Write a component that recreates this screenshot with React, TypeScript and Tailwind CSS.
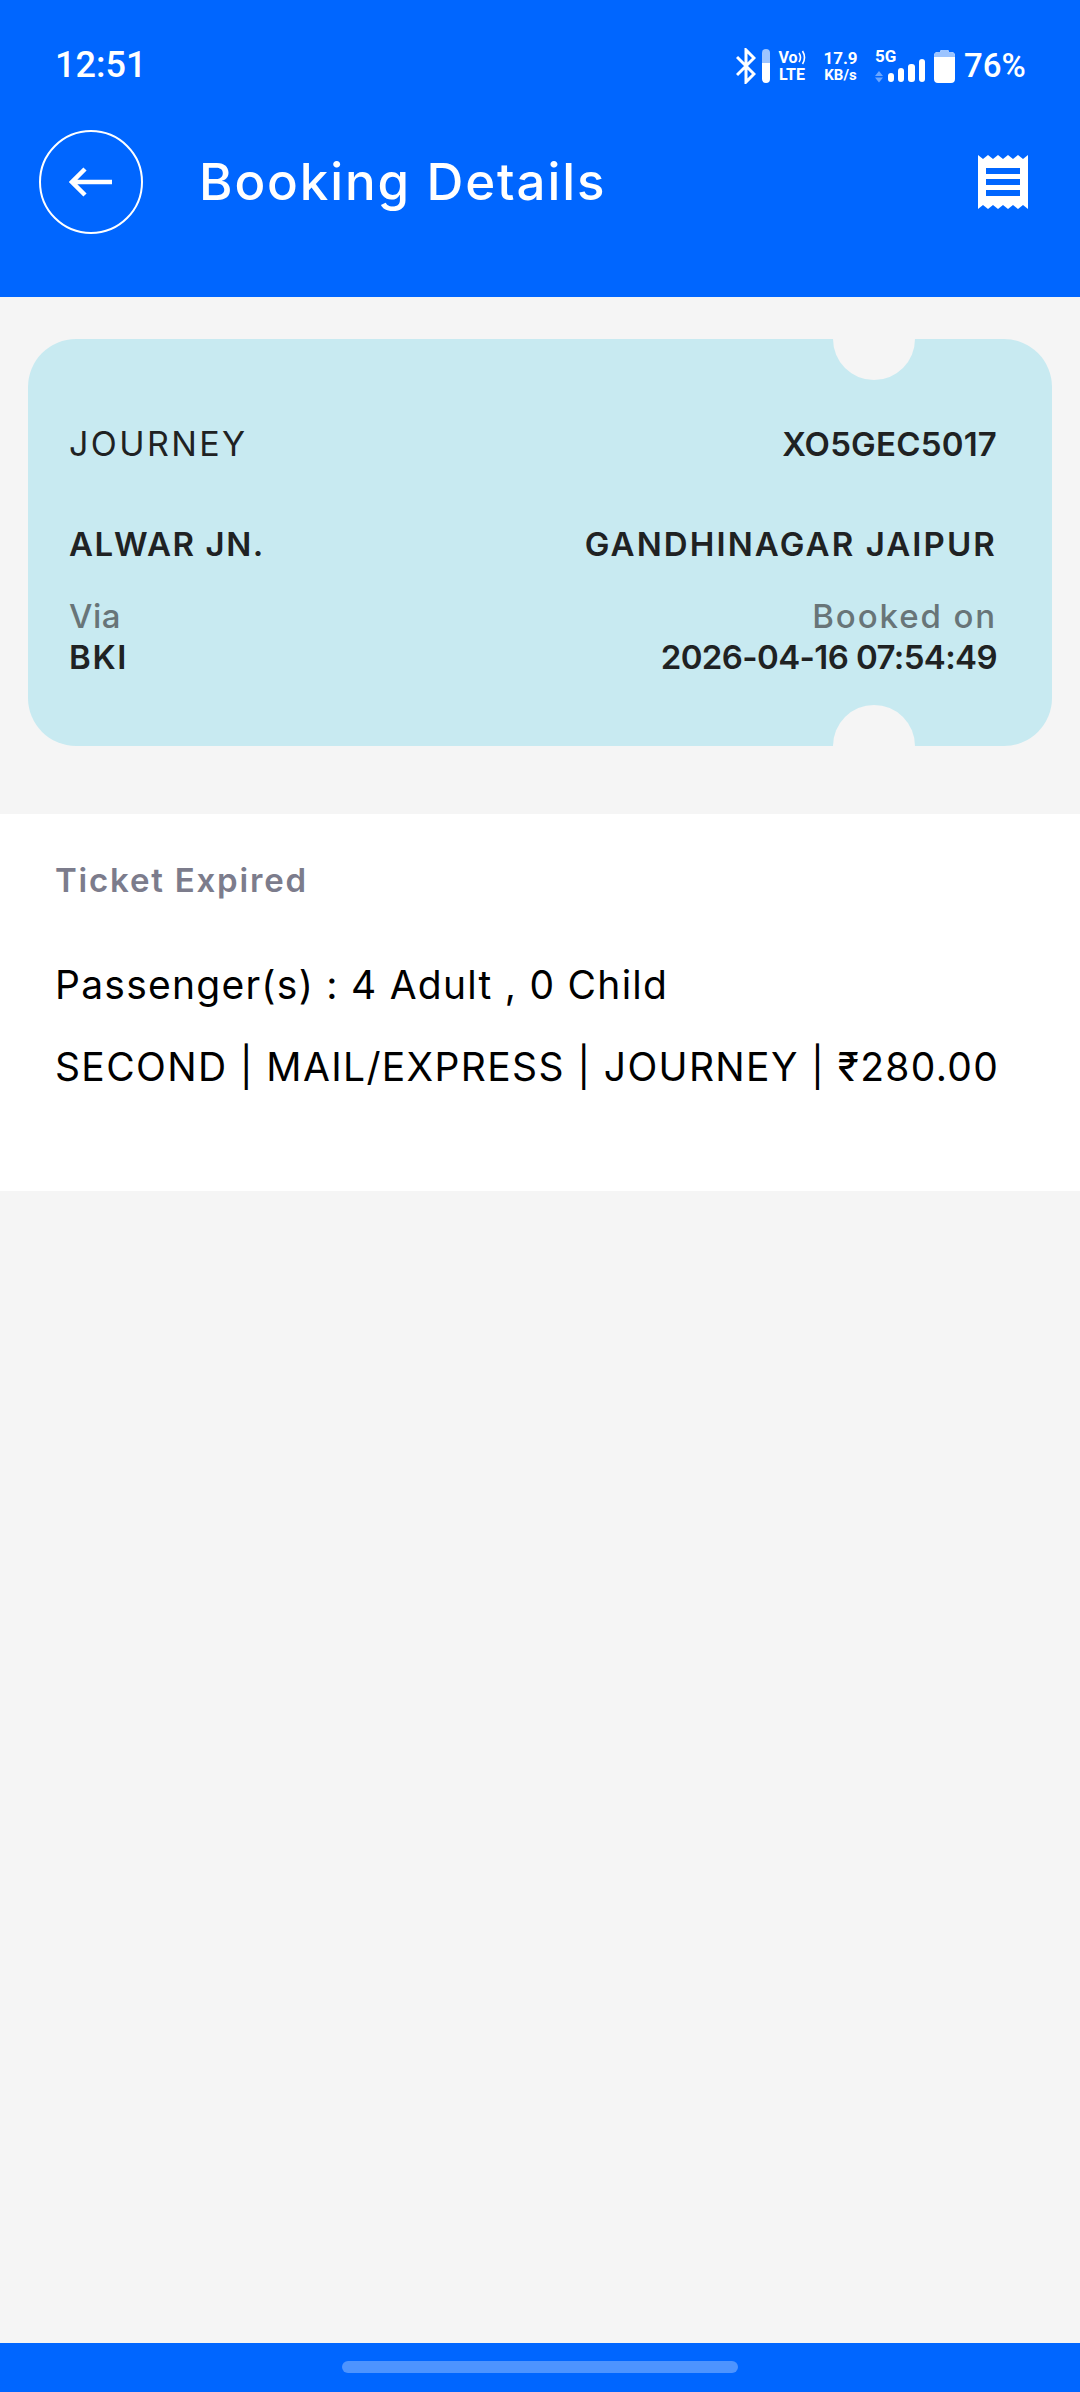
const sans = "font-['Inter','Noto_Sans',sans-serif]";

function BluetoothIcon() {
  return (
    <svg width="20" height="36" viewBox="0 0 20 36" fill="none" stroke="white" strokeWidth="3">
      <path d="M1 9l17 17-8 8V2l8 8L1 27" />
    </svg>
  );
}

function VolteWaves() {
  return (
    <svg width="8" height="15" viewBox="0 0 8 15" fill="none" stroke="white" strokeWidth="1.6">
      <path d="M1 3q3 4.500 0 9M4.500 1q4 6.500 0 13" />
    </svg>
  );
}

function SignalIcon() {
  return (
    <svg width="50" height="34" viewBox="0 0 50 34">
      <path d="M0 27l4-5 4 5zM0 28.500l4 5 4-5z" fill="#6ba6ff" />
      <rect x="13" y="24" width="6" height="9" rx="3" fill="white" />
      <rect x="23" y="19" width="6" height="14" rx="3" fill="white" />
      <rect x="33" y="15" width="7" height="18" rx="3" fill="white" />
      <rect x="44" y="10" width="6" height="23" rx="3" fill="white" />
    </svg>
  );
}

function BatteryIcon() {
  return (
    <svg width="21" height="34" viewBox="0 0 21 34">
      <path d="M6 3q0-2 2-2h5q2 0 2 2h2q4 0 4 4v23q0 4-4 4H4q-4 0-4-4V7q0-4 4-4z" fill="white" />
      <path d="M6 3q0-2 2-2h5q2 0 2 2h2q4 0 4 4v1H0V7q0-4 4-4z" fill="#9cc4ff" />
    </svg>
  );
}

function ReceiptIcon() {
  return (
    <svg width="50" height="54" viewBox="0 0 50 54">
      <path
        d="M0 0l5 4 5-4 5 4 5-4 5 4 5-4 5 4 5-4 5 4 5-4v54l-5-4-5 4-5-4-5 4-5-4-5 4-5-4-5 4-5-4-5 4z"
        fill="white"
      />
      <path d="M8 13h34v6H8zM8 24h34v6H8zM8 35h34v6H8z" fill="#0066ff" />
    </svg>
  );
}

export default function App() {
  return (
    <div className={`${sans} flex h-[2392px] w-[1080px] flex-col bg-[#f5f5f5]`}>
      {/* Header */}
      <header className="h-[297px] shrink-0 bg-[#0066ff] text-white">
        <div className="flex h-[130px] items-center justify-between pr-[56px] pl-[55px]">
          <span className="font-['Roboto',sans-serif] text-[36px] font-medium">12:51</span>
          <div className="flex items-center pt-[1px] font-['Roboto',sans-serif] font-bold text-white">
            <BluetoothIcon />
            <div className="ml-[6px] h-[34px] w-[8px] rounded-full bg-[linear-gradient(#9cc4ff_40%,#ffffff_40%)]" />
            <div className="ml-[8px] flex w-[28px] flex-col items-center text-[16px] leading-[17px]">
              <span className="flex items-center">
                Vo
                <VolteWaves />
              </span>
              <span>LTE</span>
            </div>
            <div className="ml-[16px] flex w-[37px] flex-col items-center text-[17px] leading-[18px]">
              <span>17.9</span>
              <span className="text-[15px] leading-[16px]">KB/s</span>
            </div>
            <div className="ml-[16px] flex flex-col">
              <span className="h-0 text-[17px] leading-[15px]">5G</span>
              <SignalIcon />
            </div>
            <div className="ml-[9px]">
              <BatteryIcon />
            </div>
            <span className="ml-[9px] w-[60px] text-[33px] font-medium whitespace-nowrap">76%</span>
          </div>
        </div>
        <div className="flex h-[104px] items-center justify-between pr-[52px] pl-[39px]">
          <div className="flex items-center">
            <div className="flex h-[104px] w-[104px] items-center justify-center rounded-full border-[2.5px] border-white">
              <svg width="44" height="30" viewBox="0 0 44 30" fill="none" stroke="white" strokeWidth="4.5">
                <path d="M43 15H3M16 2L3 15l13 13" />
              </svg>
            </div>
            <h1 className="ml-[56px] text-[51px] font-medium tracking-[1.9px]">Booking Details</h1>
          </div>
          <ReceiptIcon />
        </div>
      </header>

      {/* Ticket card */}
      <section className="relative mx-[28px] mt-[42px] h-[407px] shrink-0 overflow-hidden rounded-[48px] bg-[#c8eaf1] pt-[85px] pr-[55px] pl-[41px] text-[#1f2223]">
        <div className="absolute top-[-41px] left-[805px] h-[82px] w-[82px] rounded-full bg-[#f5f5f5]" />
        <div className="absolute bottom-[-41px] left-[805px] h-[82px] w-[82px] rounded-full bg-[#f5f5f5]" />
        <div className="flex justify-between text-[33px] leading-[40px]">
          <span className="text-[34px] tracking-[2.4px]">JOURNEY</span>
          <span className="font-semibold tracking-[0.2px]">XO5GEC5017</span>
        </div>
        <div className="mt-[60px] flex justify-between text-[33px] leading-[40px] font-semibold">
          <span className="tracking-[1.55px]">ALWAR JN.</span>
          <span className="tracking-[2.1px]">GANDHINAGAR JAIPUR</span>
        </div>
        <div className="mt-[32px] flex justify-between text-[33px] leading-[40px] font-medium text-[#687578]">
          <span className="tracking-[0.5px]">Via</span>
          <span className="tracking-[1.9px]">Booked on</span>
        </div>
        <div className="mt-[1px] flex justify-between text-[33px] leading-[40px] font-semibold">
          <span className="tracking-[1.7px]">BKI</span>
          <span className="tracking-[-0.6px]">2026-04-16 07:54:49</span>
        </div>
      </section>

      {/* Ticket info */}
      <section className="mt-[68px] h-[377px] shrink-0 bg-white pt-[46px] pl-[55px]">
        <p className="text-[33px] leading-[40px] font-semibold tracking-[1.8px] text-[#7c7c8c]">Ticket Expired</p>
        <p className="mt-[65px] text-[39px] leading-[40px] tracking-[1.25px] text-black">Passenger(s) : 4 Adult , 0 Child</p>
        <p className="mt-[42px] text-[39px] leading-[40px] tracking-[1.35px] text-black">
          SECOND | MAIL/EXPRESS | JOURNEY | ₹280.00
        </p>
      </section>

      {/* Navigation bar */}
      <div className="mt-auto flex h-[49px] shrink-0 justify-center bg-[#0066ff] pt-[18px]">
        <div className="h-[12px] w-[396px] rounded-full bg-[#4d94ff]" />
      </div>
    </div>
  );
}
